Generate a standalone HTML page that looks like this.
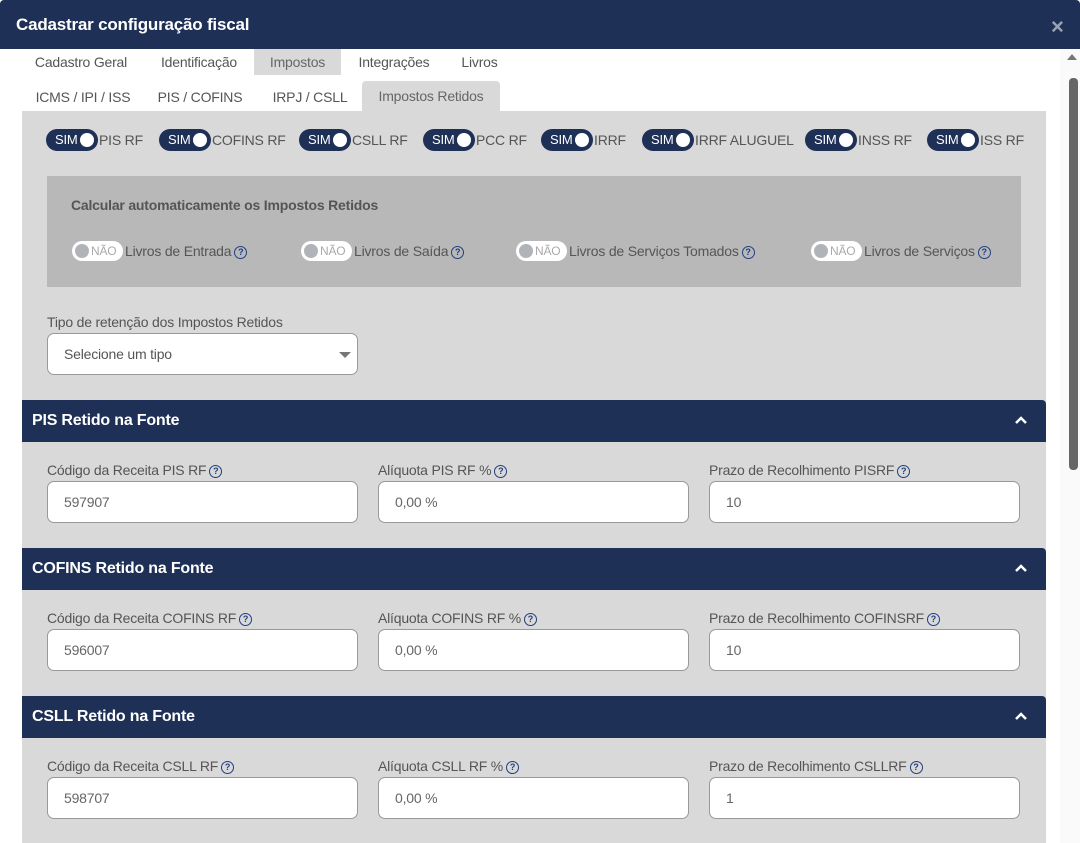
<!DOCTYPE html>
<html><head><meta charset="utf-8"><style>
*{box-sizing:border-box;margin:0;padding:0}
body{width:1080px;height:843px;overflow:hidden;background:#fff;font-family:"Liberation Sans",sans-serif;position:relative;color:#555;letter-spacing:-0.2px}
.hdr{position:absolute;left:0;top:0;width:1080px;height:49px;background:#1f3057;border-radius:4px 4px 0 0}
.hdr h1{position:absolute;left:16px;top:15px;font-size:17px;color:#fff;font-weight:bold}
.x{position:absolute;left:1051px;top:14px;color:#9aa3b5;font-size:22px;font-weight:bold}
.t{position:absolute;font-size:14px;color:#555;height:26px;line-height:26px;text-align:center}
.sel{background:#d9d9d9;color:#666}
.content{position:absolute;left:22px;top:111px;width:1024px;height:732px;background:#d9d9d9}
.sb{position:absolute;left:1060px;top:49px;width:20px;height:794px;background:#fafafa}
.thumb{position:absolute;left:1069px;top:78px;width:9px;height:392px;background:#666;border-radius:4px}
.tg{position:absolute;top:129px;height:22px;font-size:14px;line-height:22px;color:#555;white-space:nowrap}
.tg .p{display:inline-block;vertical-align:top;width:52px;height:22px;border-radius:11px;background:#1f3057;color:#fff;font-size:13px;padding-left:9px;position:relative;margin-right:1px}
.tg .p:after{content:"";position:absolute;right:4px;top:4px;width:14px;height:14px;border-radius:50%;background:#fff}
.gbox{position:absolute;left:47px;top:176px;width:974px;height:111px;background:#b8b8b8}
.gbox b{position:absolute;left:24px;top:21px;font-size:14px;color:#555}
.nt{position:absolute;top:65px;height:20px;font-size:14px;line-height:20px;color:#555;white-space:nowrap}
.nt .p{display:inline-block;vertical-align:top;width:51px;height:20px;border-radius:10px;background:#fff;color:#aaa;font-size:12px;padding-left:19px;position:relative;margin-right:2px}
.nt .p:before{content:"";position:absolute;left:3px;top:3px;width:14px;height:14px;border-radius:50%;background:#b0b3b8}
.q{display:inline-block;width:13px;height:13px;border:1.5px solid #1f3f80;border-radius:50%;font-size:9px;line-height:10px;text-align:center;color:#1f3f80;font-weight:bold;vertical-align:middle;margin-left:3px;letter-spacing:0}
.lbl{position:absolute;font-size:14px;color:#555;white-space:nowrap}
.inp{position:absolute;height:42px;background:#fff;border:1px solid #999;border-radius:7px;font-size:14px;color:#666;padding-left:16px;line-height:40px}
.sh{position:absolute;left:22px;width:1024px;height:42px;background:#1f3057;border-radius:0 4px 0 0;color:#fff;font-weight:bold;font-size:16px;padding-left:10px;line-height:42px}
.sh svg{position:absolute;right:18px;top:15px}
</style></head><body>
<div class="hdr"><h1>Cadastrar configuração fiscal</h1><div class="x">×</div></div>
<div class="t" style="left:26px;top:49px;width:110px">Cadastro Geral</div>
<div class="t" style="left:150px;top:49px;width:98px">Identificação</div>
<div class="t sel" style="left:254px;top:49px;width:87px">Impostos</div>
<div class="t" style="left:348px;top:49px;width:92px">Integrações</div>
<div class="t" style="left:452px;top:49px;width:55px">Livros</div>
<div class="t" style="left:26px;top:84px;width:114px">ICMS / IPI / ISS</div>
<div class="t" style="left:150px;top:84px;width:100px">PIS / COFINS</div>
<div class="t" style="left:262px;top:84px;width:96px">IRPJ / CSLL</div>
<div class="t sel" style="left:362px;top:81px;width:138px;height:30px;line-height:30px;border-radius:4px 4px 0 0">Impostos Retidos</div>
<div class="content"></div>
<div class="sb"></div><div class="thumb"></div>
<div style="position:absolute;left:1067px;top:54px;width:0;height:0;border-left:5px solid transparent;border-right:5px solid transparent;border-bottom:6px solid #777"></div>
<div class="tg" style="left:46px"><span class="p">SIM</span>PIS RF</div>
<div class="tg" style="left:159px"><span class="p">SIM</span>COFINS RF</div>
<div class="tg" style="left:299px"><span class="p">SIM</span>CSLL RF</div>
<div class="tg" style="left:423px"><span class="p">SIM</span>PCC RF</div>
<div class="tg" style="left:541px"><span class="p">SIM</span>IRRF</div>
<div class="tg" style="left:642px"><span class="p">SIM</span>IRRF ALUGUEL</div>
<div class="tg" style="left:805px"><span class="p">SIM</span>INSS RF</div>
<div class="tg" style="left:927px"><span class="p">SIM</span>ISS RF</div>
<div class="gbox"><b>Calcular automaticamente os Impostos Retidos</b>
<div class="nt" style="left:25px"><span class="p">NÃO</span>Livros de Entrada<span class="q">?</span></div>
<div class="nt" style="left:254px"><span class="p">NÃO</span>Livros de Saída<span class="q">?</span></div>
<div class="nt" style="left:469px"><span class="p">NÃO</span>Livros de Serviços Tomados<span class="q">?</span></div>
<div class="nt" style="left:764px"><span class="p">NÃO</span>Livros de Serviços<span class="q">?</span></div>
</div>
<div class="lbl" style="left:47px;top:314px">Tipo de retenção dos Impostos Retidos</div>
<div class="inp" style="left:47px;top:333px;width:311px;height:42px;color:#555">Selecione um tipo<div style="position:absolute;right:6px;top:18px;border-left:6px solid transparent;border-right:6px solid transparent;border-top:6px solid #777"></div></div>

<div class="sh" style="top:400px">PIS Retido na Fonte<svg width="14" height="10"><path d="M2 8L7 3L12 8" stroke="#fff" stroke-width="2.5" fill="none"/></svg></div>
<div class="lbl" style="left:47px;top:462px">Código da Receita PIS RF<span class="q">?</span></div>
<div class="lbl" style="left:378px;top:462px">Alíquota PIS RF %<span class="q">?</span></div>
<div class="lbl" style="left:709px;top:462px">Prazo de Recolhimento PISRF<span class="q">?</span></div>
<div class="inp" style="left:47px;top:481px;width:311px">597907</div>
<div class="inp" style="left:378px;top:481px;width:311px">0,00 %</div>
<div class="inp" style="left:709px;top:481px;width:311px">10</div>

<div class="sh" style="top:548px">COFINS Retido na Fonte<svg width="14" height="10"><path d="M2 8L7 3L12 8" stroke="#fff" stroke-width="2.5" fill="none"/></svg></div>
<div class="lbl" style="left:47px;top:610px">Código da Receita COFINS RF<span class="q">?</span></div>
<div class="lbl" style="left:378px;top:610px">Alíquota COFINS RF %<span class="q">?</span></div>
<div class="lbl" style="left:709px;top:610px">Prazo de Recolhimento COFINSRF<span class="q">?</span></div>
<div class="inp" style="left:47px;top:629px;width:311px">596007</div>
<div class="inp" style="left:378px;top:629px;width:311px">0,00 %</div>
<div class="inp" style="left:709px;top:629px;width:311px">10</div>

<div class="sh" style="top:696px">CSLL Retido na Fonte<svg width="14" height="10"><path d="M2 8L7 3L12 8" stroke="#fff" stroke-width="2.5" fill="none"/></svg></div>
<div class="lbl" style="left:47px;top:758px">Código da Receita CSLL RF<span class="q">?</span></div>
<div class="lbl" style="left:378px;top:758px">Alíquota CSLL RF %<span class="q">?</span></div>
<div class="lbl" style="left:709px;top:758px">Prazo de Recolhimento CSLLRF<span class="q">?</span></div>
<div class="inp" style="left:47px;top:777px;width:311px">598707</div>
<div class="inp" style="left:378px;top:777px;width:311px">0,00 %</div>
<div class="inp" style="left:709px;top:777px;width:311px">1</div>
</body></html>
